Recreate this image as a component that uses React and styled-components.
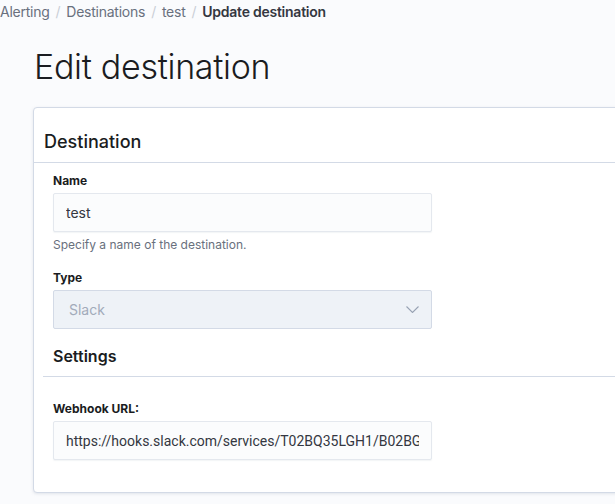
import React from "react";
import styled, { createGlobalStyle } from "styled-components";

const GlobalStyle = createGlobalStyle`
  html, body {
    margin: 0;
    padding: 0;
    background: #fafbfd;
    font-family: Inter, "Noto Sans", sans-serif;
    color: #343741;
    overflow: hidden;
  }
`;

const Page = styled.div`
  width: 615px;
  height: 504px;
  overflow: hidden;
`;

const Breadcrumbs = styled.nav`
  display: flex;
  align-items: center;
  padding-top: 2px;
  font-size: 14px;
  line-height: 20px;
  letter-spacing: -0.25px;
  white-space: nowrap;
`;

const Crumb = styled.span`
  color: ${(p) => (p.$current ? "#343741" : "#69707d")};
  font-weight: ${(p) => (p.$current ? 600 : 400)};
`;

const Separator = styled.span`
  color: #c9ced6;
  margin: 0 6px;
`;

const Content = styled.div`
  padding-left: 33px;
`;

const Title = styled.h1`
  margin: 25px 0 20px 1px;
  font-size: 34px;
  line-height: 40px;
  font-weight: 300;
  color: #1a1c21;
  letter-spacing: -0.3px;
`;

const Panel = styled.section`
  width: 620px;
  height: 386px;
  box-sizing: border-box;
  background: #ffffff;
  border: 1px solid #d3dae6;
  border-radius: 4px;
  box-shadow: 0 1px 3px rgba(152, 162, 179, 0.25);
`;

const PanelHeader = styled.div`
  height: 55px;
  box-sizing: border-box;
  display: flex;
  align-items: flex-end;
  padding: 0 10px 8px;
  border-bottom: 1px solid #d3dae6;
`;

const PanelTitle = styled.h2`
  margin: 0;
  font-size: 18px;
  line-height: 24px;
  font-weight: 500;
  color: #1a1c21;
`;

const PanelBody = styled.div`
  padding: 9px 19px 0;
`;

const Field = styled.div`
  display: flex;
  flex-direction: column;
  width: 379px;
  margin-bottom: ${(p) => p.$gap || 0}px;
`;

const Label = styled.label`
  font-size: 12px;
  line-height: 18px;
  font-weight: 700;
  color: #1a1c21;
  margin-bottom: 3px;
`;

const TextInput = styled.input`
  height: 39px;
  box-sizing: border-box;
  width: 100%;
  padding: 0 12px;
  border: 1px solid #e4e8ee;
  border-radius: 2px;
  background: #fbfcfd;
  box-shadow: 0 1px 1px rgba(152, 162, 179, 0.12);
  font-family: ${(p) => (p.$url ? "Roboto" : "Inter")}, sans-serif;
  font-size: 14px;
  color: #343741;
  outline: none;
`;

const HelpText = styled.div`
  margin-top: 5px;
  font-size: 12px;
  line-height: 16px;
  color: #69707d;
`;

const SelectBox = styled.div`
  height: 39px;
  box-sizing: border-box;
  display: flex;
  align-items: center;
  justify-content: space-between;
  padding: 0 12px 0 15px;
  background: #eef2f7;
  border: 1px solid #d3dae6;
  border-radius: 2px;
  font-size: 14px;
  color: #a2abba;
`;

const Chevron = () => (
  <svg width="13" height="7" viewBox="0 0 13 7" fill="none">
    <path d="M0.5 0.5l6 6 6-6" stroke="#98a2b3" strokeWidth="1.1" />
  </svg>
);

const Settings = styled.div`
  margin: 15px 0 0 -10px;
`;

const SettingsTitle = styled.h3`
  margin: 0 -40px 0 0;
  padding: 0 0 8px 10px;
  font-size: 16px;
  line-height: 24px;
  font-weight: 600;
  color: #1a1c21;
  border-bottom: 1px solid #d3dae6;
`;

const SettingsBody = styled.div`
  padding: 23px 0 0 10px;
`;

export default function App() {
  return (
    <Page>
      <GlobalStyle />
      <Breadcrumbs>
        <Crumb>Alerting</Crumb>
        <Separator>/</Separator>
        <Crumb>Destinations</Crumb>
        <Separator>/</Separator>
        <Crumb>test</Crumb>
        <Separator>/</Separator>
        <Crumb $current>Update destination</Crumb>
      </Breadcrumbs>
      <Content>
        <Title>Edit destination</Title>
        <Panel>
          <PanelHeader>
            <PanelTitle>Destination</PanelTitle>
          </PanelHeader>
          <PanelBody>
            <Field $gap={16}>
              <Label>Name</Label>
              <TextInput defaultValue="test" />
              <HelpText>Specify a name of the destination.</HelpText>
            </Field>
            <Field>
              <Label>Type</Label>
              <SelectBox>
                Slack
                <Chevron />
              </SelectBox>
            </Field>
            <Settings>
              <SettingsTitle>Settings</SettingsTitle>
              <SettingsBody>
                <Field>
                  <Label>Webhook URL:</Label>
                  <TextInput
                    $url
                    defaultValue="https://hooks.slack.com/services/T02BQ35LGH1/B02BG7XK2QF/abcdef"
                  />
                </Field>
              </SettingsBody>
            </Settings>
          </PanelBody>
        </Panel>
      </Content>
    </Page>
  );
}
